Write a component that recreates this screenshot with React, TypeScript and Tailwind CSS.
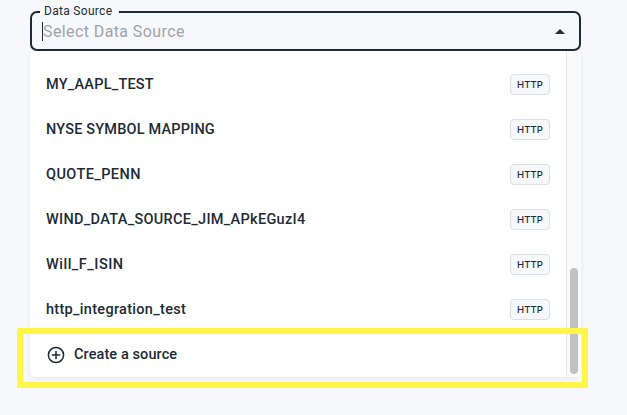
const sources = [
  { name: 'MY_AAPL_TEST', tracking: 'tracking-[0.22px]' },
  { name: 'NYSE SYMBOL MAPPING', tracking: 'tracking-[0.18px]' },
  { name: 'QUOTE_PENN', tracking: 'tracking-[0.42px]' },
  { name: 'WIND_DATA_SOURCE_JIM_APkEGuzI4', tracking: 'tracking-[0.3px]' },
  { name: 'Will_F_ISIN', tracking: 'tracking-[0.5px]' },
  { name: 'http_integration_test', tracking: 'tracking-[0.3px]' },
];

function SourceRow({ name, tracking }: { name: string; tracking: string }) {
  return (
    <li className="flex h-[45px] items-center justify-between px-4">
      <span className={`text-[14.5px] leading-5 font-medium whitespace-nowrap ${tracking}`}>{name}</span>
      <span className="flex h-[21px] w-10 items-center justify-center rounded-[4px] border border-[#dcdfe6] bg-[#f7f8fc] pt-px font-['Inter',sans-serif] text-[9.5px] leading-none font-medium tracking-[0.15px]">
        HTTP
      </span>
    </li>
  );
}

export default function App() {
  return (
    <main className="relative h-[415px] w-[627px] overflow-hidden bg-[#f7f8fc] pt-[11px] pl-[30px] font-['Roboto',sans-serif] text-[#1c2b36]">
      <div className="relative flex h-10 w-[551px] items-center justify-between rounded-[7px] border-2 border-[#1c2b36] pr-[14px] pl-[10px]">
        <label className="absolute -top-[10px] left-2 h-4 w-[79px] bg-[#f7f8fc] pl-1 text-[12px] leading-4 tracking-[0.3px] whitespace-nowrap">
          Data Source
        </label>
        <div className="flex h-[19px] items-center border-l border-[#1c2b36] pt-[2px] text-[16px] leading-5 tracking-[0.4px] text-[#a0a4a8]">
          Select Data Source
        </div>
        <svg className="h-[5px] w-[10px]" viewBox="0 0 10 5" fill="currentColor" aria-hidden="true">
          <path d="M0 5 5 0l5 5z" />
        </svg>
      </div>

      <div className="flex h-[326px] w-[551px] overflow-hidden rounded-md bg-white shadow-[0_1px_5px_rgba(28,43,54,0.08)]">
        <div className="w-[536px] pt-[11px]">
          <ul>
            {sources.map((source) => (
              <SourceRow key={source.name} {...source} />
            ))}
          </ul>
          <button className="flex h-[45px] w-full items-center gap-[9px] pl-[17px] text-[14.5px] leading-5 font-medium tracking-[0.1px]">
            <svg className="h-[18px] w-[18px]" viewBox="0 0 18 18" fill="none" stroke="currentColor" strokeWidth="1.5" aria-hidden="true">
              <circle cx="9" cy="9" r="7.6" />
              <path d="M9 4.8v8.4M4.8 9h8.4" />
            </svg>
            <span>Create a source</span>
          </button>
        </div>
        <div className="flex w-[15px] items-end border-l border-[#e7e7e7] bg-[#fafafa] pb-[3px] pl-[3px]">
          <div className="h-[106px] w-2 rounded-full bg-[#c1c1c1]" />
        </div>
      </div>

      <div className="pointer-events-none absolute top-[328px] left-[17px] h-[60px] w-[571px] border-[6px] border-[#fff549]" />
    </main>
  );
}
